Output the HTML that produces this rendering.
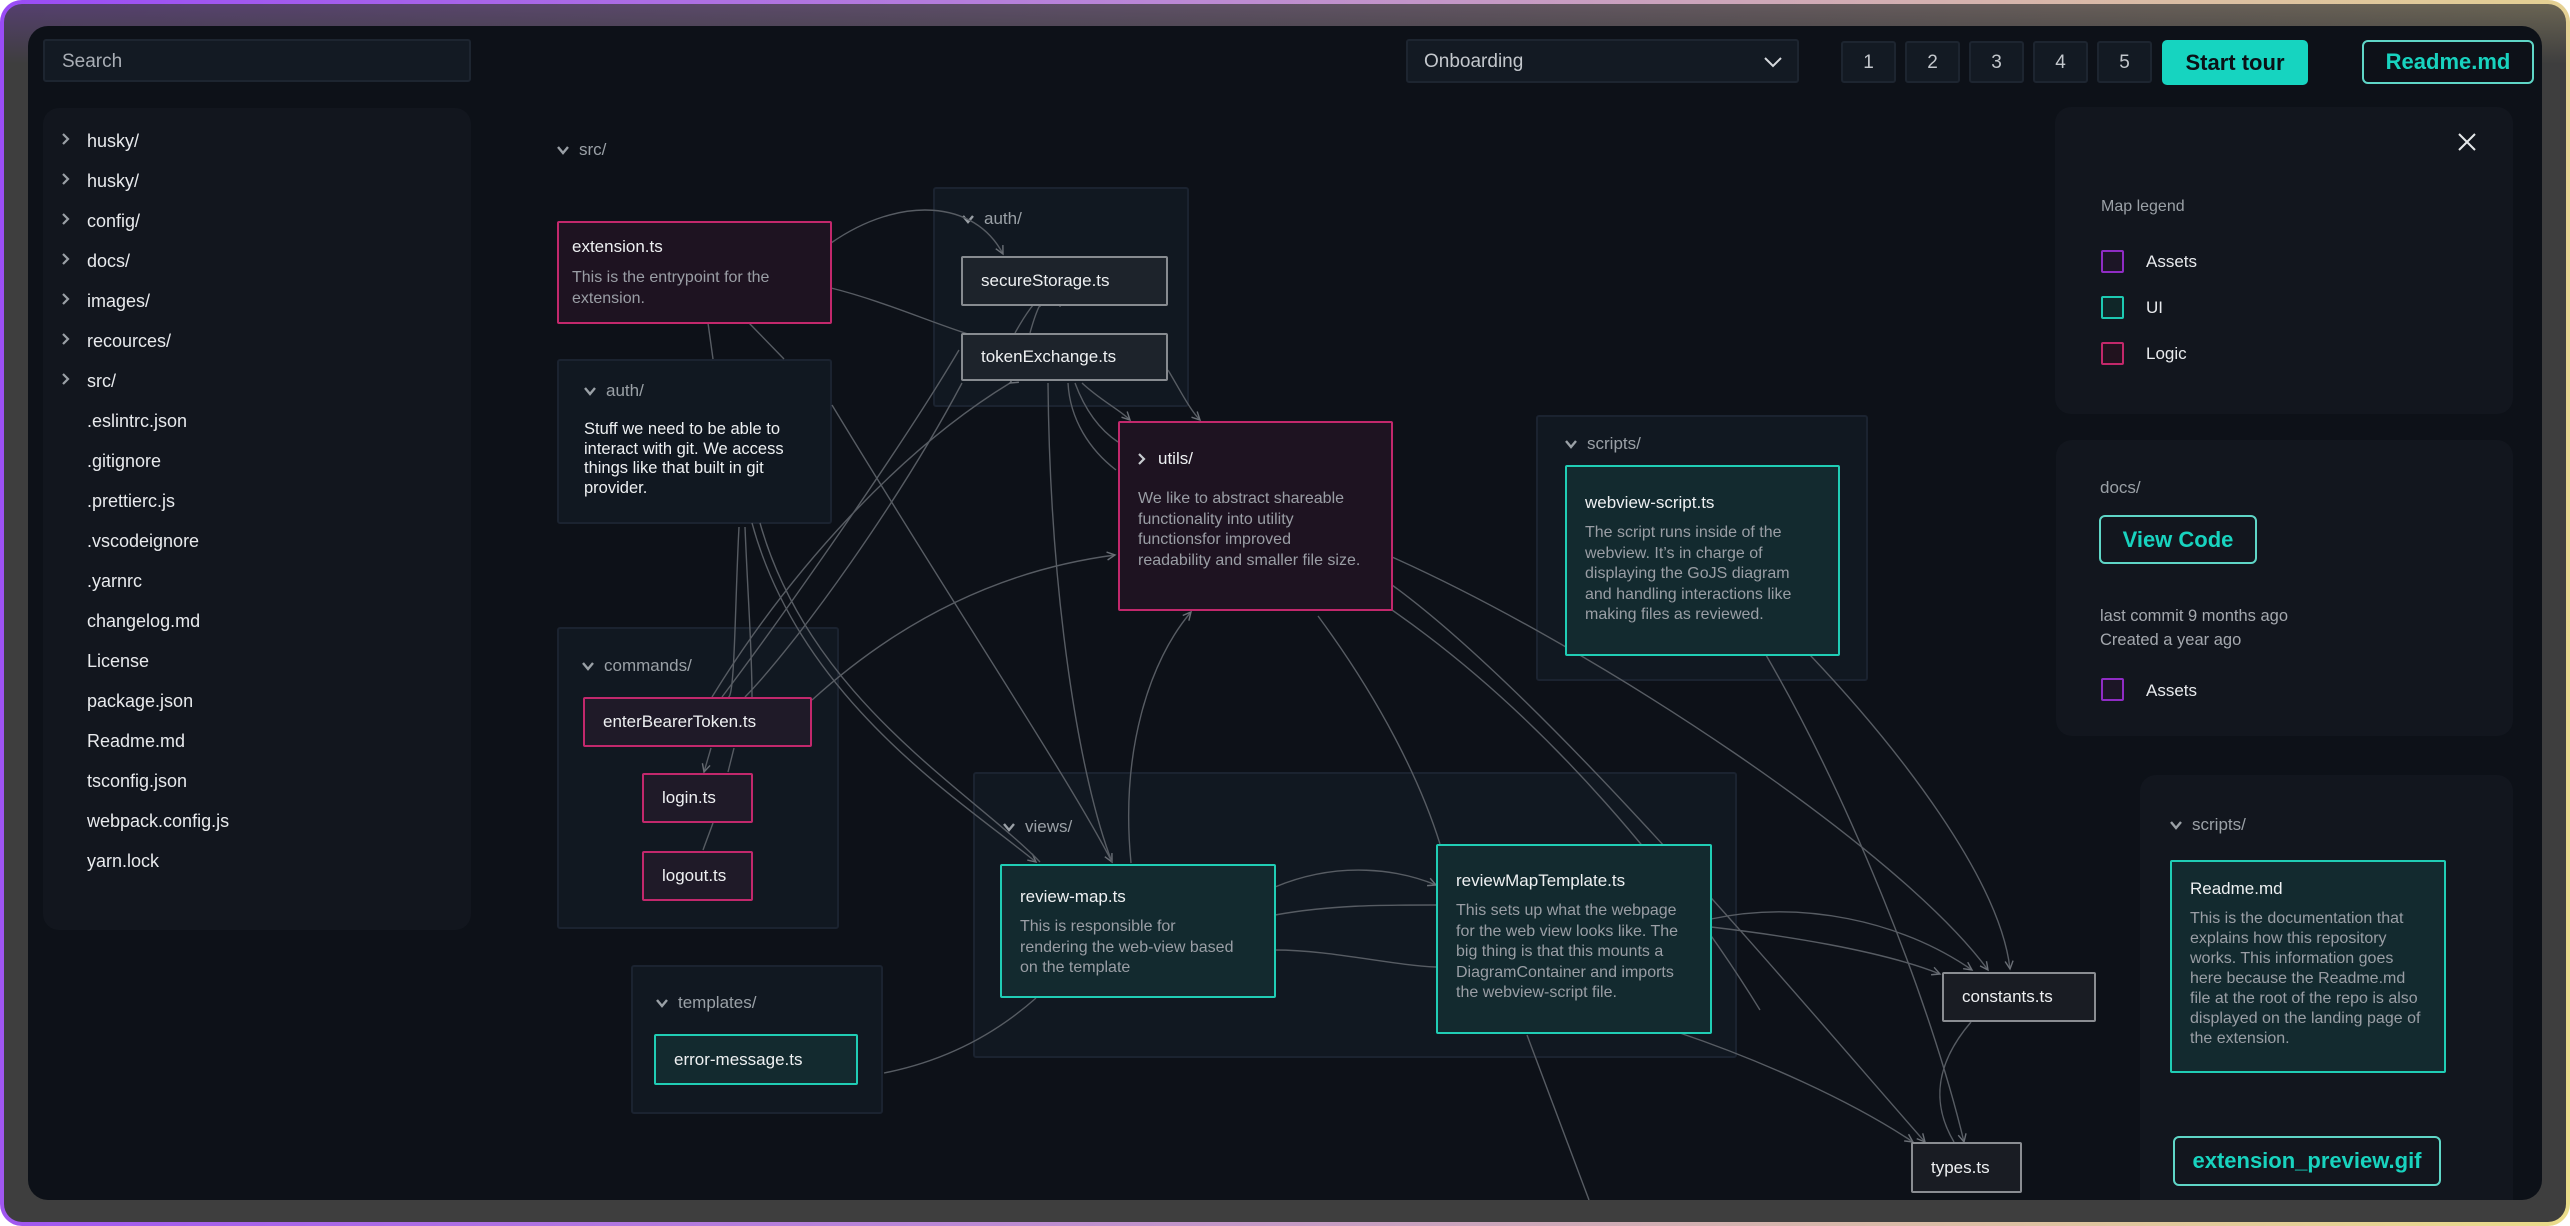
<!DOCTYPE html>
<html><head><meta charset="utf-8"><style>
*{box-sizing:border-box;margin:0;padding:0}
html,body{width:2570px;height:1226px;overflow:hidden;background:#fff}
body{font-family:"Liberation Sans",Arial,sans-serif;position:relative}
#outer{position:absolute;left:0;top:0;width:2570px;height:1226px;border-radius:22px;background:linear-gradient(100deg,#9a4cf6 0%,#b985d8 40%,#d9b9a8 75%,#eadc8a 100%)}
#frame{position:absolute;left:4px;top:4px;right:4px;bottom:4px;border-radius:18px;background:linear-gradient(180deg,rgba(58,58,58,.72) 0px,#3e3e3e 60px,#3e3e3e 100%)}
#panel{position:absolute;left:28px;top:26px;width:2514px;height:1174px;border-radius:20px;background:#0d1118;overflow:hidden}
.a{position:absolute}
.inp{position:absolute;background:#131a23;border:2px solid #1d2530;border-radius:3px;color:#c3c7cc;font-size:19px;display:flex;align-items:center;padding-top:2px}
.num{position:absolute;top:41px;width:55px;height:42px;background:#131a23;border:2px solid #1d2530;border-radius:3px;color:#c3c7cc;font-size:19px;display:flex;align-items:center;justify-content:center;padding-top:2px}
.tree{position:absolute;left:87px;font-size:18px;color:#e8eaed}
.grp{position:absolute;background:#111821;border:2px solid #1b2330;border-radius:3px}
.gl{position:absolute;font-size:17px;color:#9aa0a6;display:flex;align-items:center;gap:10px}
.card{position:absolute;border:2px solid;border-radius:2px;padding:0 18px}
.logic{background:#1e1321;border-color:#c2286c}
.ui{background:#132a2f;border-color:#20cdb5}
.neu{background:#1d232b;border-color:#878b90}
.neu2{background:#191c23;border-color:#8a8d92}
.t{font-size:17px;color:#eef0f2}
.d{font-size:16px;color:#9a9ea5;line-height:20.5px}
.side{position:absolute;background:#12161e;border-radius:16px}
.sq{position:absolute;width:23px;height:23px;border:2px solid;border-radius:2px}
.lt{position:absolute;font-size:17px;color:#e8eaed}
</style></head><body>
<div id="outer"><div id="frame"></div></div>
<div id="panel"></div>

<div class="inp" style="left:43px;top:39px;width:428px;height:43px;padding-left:17px;color:#a9aeb5">Search</div>
<div class="inp" style="left:1406px;top:39px;width:393px;height:44px;padding-left:16px">Onboarding
<svg class="a" style="right:14px;top:14px" width="20" height="14" viewBox="0 0 20 14"><path d="M2 3 L10 11 L18 3" fill="none" stroke="#d6d9dd" stroke-width="2"/></svg></div>
<div class="num" style="left:1841px">1</div>
<div class="num" style="left:1905px">2</div>
<div class="num" style="left:1969px">3</div>
<div class="num" style="left:2033px">4</div>
<div class="num" style="left:2097px">5</div>
<div class="a" style="left:2162px;top:40px;width:146px;height:45px;background:#16d4c0;border-radius:5px;color:#0b1117;font-size:22px;font-weight:bold;display:flex;align-items:center;justify-content:center">Start tour</div>
<div class="a" style="left:2362px;top:40px;width:172px;height:44px;border:2px solid #5fd6c7;border-radius:6px;color:#18d3bf;font-size:22px;font-weight:bold;display:flex;align-items:center;justify-content:center">Readme.md</div>

<div class="side" style="left:43px;top:108px;width:428px;height:822px"></div>
<svg class="a" style="left:0;top:0" width="480" height="420">
<g fill="none" stroke="#9aa0a6" stroke-width="2.2">
<path d="M63 134 L68 139 L63 144"/><path d="M63 174 L68 179 L63 184"/><path d="M63 214 L68 219 L63 224"/><path d="M63 254 L68 259 L63 264"/><path d="M63 294 L68 299 L63 304"/><path d="M63 334 L68 339 L63 344"/><path d="M63 374 L68 379 L63 384"/>
</g></svg>
<div class="tree" style="top:131px">husky/</div>
<div class="tree" style="top:171px">husky/</div>
<div class="tree" style="top:211px">config/</div>
<div class="tree" style="top:251px">docs/</div>
<div class="tree" style="top:291px">images/</div>
<div class="tree" style="top:331px">recources/</div>
<div class="tree" style="top:371px">src/</div>
<div class="tree" style="top:411px">.eslintrc.json</div>
<div class="tree" style="top:451px">.gitignore</div>
<div class="tree" style="top:491px">.prettierc.js</div>
<div class="tree" style="top:531px">.vscodeignore</div>
<div class="tree" style="top:571px">.yarnrc</div>
<div class="tree" style="top:611px">changelog.md</div>
<div class="tree" style="top:651px">License</div>
<div class="tree" style="top:691px">package.json</div>
<div class="tree" style="top:731px">Readme.md</div>
<div class="tree" style="top:771px">tsconfig.json</div>
<div class="tree" style="top:811px">webpack.config.js</div>
<div class="tree" style="top:851px">yarn.lock</div>

<div class="gl" style="left:557px;top:140px"><svg width="12" height="9"><path d="M1 1 L6 7 L11 1" fill="none" stroke="#9aa0a6" stroke-width="2.4"/></svg>src/</div>

<div class="grp" style="left:933px;top:187px;width:256px;height:220px"></div>
<div class="gl" style="left:962px;top:209px"><svg width="12" height="9"><path d="M1 1 L6 7 L11 1" fill="none" stroke="#9aa0a6" stroke-width="2.4"/></svg>auth/</div>

<div class="grp" style="left:557px;top:359px;width:275px;height:165px"></div>
<div class="gl" style="left:584px;top:381px"><svg width="12" height="9"><path d="M1 1 L6 7 L11 1" fill="none" stroke="#9aa0a6" stroke-width="2.4"/></svg>auth/</div>
<div class="a" style="left:584px;top:420px;font-size:16.5px;color:#eef0f2;line-height:19.7px;width:240px">Stuff we need to be able to interact with git. We access things like that built in git provider.</div>

<div class="grp" style="left:1536px;top:415px;width:332px;height:266px"></div>
<div class="gl" style="left:1565px;top:434px"><svg width="12" height="9"><path d="M1 1 L6 7 L11 1" fill="none" stroke="#9aa0a6" stroke-width="2.4"/></svg>scripts/</div>

<div class="grp" style="left:557px;top:627px;width:282px;height:302px"></div>
<div class="gl" style="left:582px;top:656px"><svg width="12" height="9"><path d="M1 1 L6 7 L11 1" fill="none" stroke="#9aa0a6" stroke-width="2.4"/></svg>commands/</div>

<div class="grp" style="left:631px;top:965px;width:252px;height:149px"></div>
<div class="gl" style="left:656px;top:993px"><svg width="12" height="9"><path d="M1 1 L6 7 L11 1" fill="none" stroke="#9aa0a6" stroke-width="2.4"/></svg>templates/</div>

<div class="grp" style="left:973px;top:772px;width:764px;height:286px"></div>
<div class="gl" style="left:1003px;top:817px"><svg width="12" height="9"><path d="M1 1 L6 7 L11 1" fill="none" stroke="#9aa0a6" stroke-width="2.4"/></svg>views/</div>

<svg class="a" style="left:0;top:0" width="2570" height="1226">
<defs><marker id="ar" markerWidth="12" markerHeight="12" refX="9" refY="5" orient="auto" markerUnits="userSpaceOnUse"><path d="M1 1 L9 5 L1 9" fill="none" stroke="#6a6f76" stroke-width="1.4"/></marker></defs>
<g fill="none" stroke="#575c63" stroke-width="1.4">
<path d="M831,243 C 900,195 975,200 1003,254" marker-end="url(#ar)"/>
<path d="M831,288 C 880,300 930,322 968,334"/>
<path d="M708,323 L713,359"/><path d="M749,323 L784,359"/>
<path d="M832,405 C 950,600 1070,780 1112,862" marker-end="url(#ar)"/>
<path d="M959,350 C 900,450 780,620 722,697"/>
<path d="M962,383 C 900,500 800,640 745,697"/>
<path d="M1010,383 C 900,450 790,570 712,697" marker-start="url(#ar)"/>
<path d="M739,527 C 735,600 735,700 728,697"/>
<path d="M745,527 C 748,600 752,650 752,697"/>
<path d="M752,523 C 800,700 960,800 1036,862" marker-end="url(#ar)"/>
<path d="M760,523 C 810,700 970,790 1040,862"/>
<path d="M812,700 C 900,620 1000,570 1115,555" marker-end="url(#ar)"/>
<path d="M1048,383 C 1050,600 1080,780 1112,862"/>
<path d="M1131,863 C 1120,750 1150,660 1191,612" marker-end="url(#ar)"/>
<path d="M1082,383 C 1100,400 1120,410 1130,420" marker-end="url(#ar)"/>
<path d="M1168,370 C 1180,390 1190,410 1200,420" marker-end="url(#ar)"/>
<path d="M1068,383 C 1070,420 1090,450 1116,470"/>
<path d="M1075,383 C 1085,410 1100,430 1118,442"/>
<path d="M1040,307 L1040,278" marker-end="url(#ar)"/><path d="M1060,307 L1062,278" marker-end="url(#ar)"/>
<path d="M1015,333 C 1025,315 1035,300 1048,290" marker-end="url(#ar)"/>
<path d="M1030,333 C 1035,315 1040,300 1050,292" marker-end="url(#ar)"/>
<path d="M1392,557 C 1600,650 1900,850 1988,970" marker-end="url(#ar)"/>
<path d="M1392,585 C 1550,700 1800,1000 1925,1142" marker-end="url(#ar)"/>
<path d="M1318,616 C 1380,700 1420,780 1440,844"/>
<path d="M1392,610 C 1550,720 1680,880 1760,1010"/>
<path d="M1766,655 C 1850,800 1930,1000 1964,1142" marker-end="url(#ar)"/>
<path d="M1810,655 C 1900,750 2000,880 2010,969" marker-end="url(#ar)"/>
<path d="M1711,919 C 1800,900 1900,920 1972,970" marker-end="url(#ar)"/>
<path d="M1711,927 C 1780,935 1880,950 1940,974" marker-end="url(#ar)"/>
<path d="M1677,1032 C 1760,1060 1850,1100 1913,1142" marker-end="url(#ar)"/>
<path d="M1527,1035 L1589,1200"/>
<path d="M1971,1022 C 1930,1070 1935,1110 1954,1142"/>
<path d="M1275,887 C 1340,860 1400,870 1436,885" marker-end="url(#ar)"/>
<path d="M1275,915 C 1330,905 1380,905 1436,905"/>
<path d="M1275,950 C 1330,950 1390,965 1436,967"/>
<path d="M884,1073 C 950,1060 1000,1030 1036,998"/>
<path d="M711,748 L704,772" marker-end="url(#ar)"/><path d="M734,748 L728,772"/>
<path d="M713,823 L703,850"/>
</g></svg>

<div class="card logic" style="left:557px;top:221px;width:275px;height:103px;padding:0 13px">
<div class="t" style="margin-top:14px">extension.ts</div>
<div class="d" style="margin-top:11px">This is the entrypoint for the extension.</div></div>

<div class="card neu" style="left:961px;top:256px;width:207px;height:50px;display:flex;align-items:center"><span class="t">secureStorage.ts</span></div>
<div class="card neu" style="left:961px;top:333px;width:207px;height:48px;display:flex;align-items:center"><span class="t">tokenExchange.ts</span></div>

<div class="card logic" style="left:1118px;top:421px;width:275px;height:190px;padding-right:28px">
<div class="t" style="margin-top:26px;display:flex;align-items:center;gap:12px"><svg width="8" height="12"><path d="M1 1 L6 6 L1 11" fill="none" stroke="#c8ccd0" stroke-width="2.2"/></svg>utils/</div>
<div class="d" style="margin-top:20px">We like to abstract shareable functionality into utility functionsfor improved readability and smaller file size.</div></div>

<div class="card ui" style="left:1565px;top:465px;width:275px;height:191px">
<div class="t" style="margin-top:26px">webview-script.ts</div>
<div class="d" style="margin-top:10px">The script runs inside of the webview. It’s in charge of displaying the GoJS diagram and handling interactions like making files as reviewed.</div></div>

<div class="card logic" style="left:583px;top:697px;width:229px;height:50px;display:flex;align-items:center;background:#1f1a28"><span class="t">enterBearerToken.ts</span></div>
<div class="card logic" style="left:642px;top:773px;width:111px;height:50px;display:flex;align-items:center;background:#1f1a28"><span class="t">login.ts</span></div>
<div class="card logic" style="left:642px;top:851px;width:111px;height:50px;display:flex;align-items:center;background:#1f1a28"><span class="t">logout.ts</span></div>

<div class="card ui" style="left:654px;top:1034px;width:204px;height:51px;display:flex;align-items:center"><span class="t">error-message.ts</span></div>

<div class="card ui" style="left:1000px;top:864px;width:276px;height:134px;padding-right:30px">
<div class="t" style="margin-top:21px">review-map.ts</div>
<div class="d" style="margin-top:10px">This is responsible for rendering the web-view based on the template</div></div>

<div class="card ui" style="left:1436px;top:844px;width:276px;height:190px">
<div class="t" style="margin-top:25px">reviewMapTemplate.ts</div>
<div class="d" style="margin-top:10px">This sets up what the webpage for the web view looks like. The big thing is that this mounts a DiagramContainer and imports the webview-script file.</div></div>

<div class="card neu2" style="left:1942px;top:972px;width:154px;height:50px;display:flex;align-items:center"><span class="t">constants.ts</span></div>
<div class="card neu2" style="left:1911px;top:1142px;width:111px;height:51px;display:flex;align-items:center"><span class="t">types.ts</span></div>

<div class="side" style="left:2055px;top:107px;width:458px;height:307px"></div>
<svg class="a" style="left:2456px;top:131px" width="22" height="22"><path d="M3 3 L19 19 M19 3 L3 19" stroke="#e6e8ea" stroke-width="2"/></svg>
<div class="a" style="left:2101px;top:198px;font-size:16px;color:#9aa0a6">Map legend</div>
<div class="sq" style="left:2101px;top:250px;border-color:#8f2cc4;background:#1c1526"></div><div class="lt" style="left:2146px;top:252px">Assets</div>
<div class="sq" style="left:2101px;top:296px;border-color:#1dc9b2;background:#0f2628"></div><div class="lt" style="left:2146px;top:298px">UI</div>
<div class="sq" style="left:2101px;top:342px;border-color:#c2286a;background:#21121e"></div><div class="lt" style="left:2146px;top:344px">Logic</div>

<div class="side" style="left:2056px;top:440px;width:457px;height:296px"></div>
<div class="a" style="left:2100px;top:478px;font-size:17px;color:#9aa0a6">docs/</div>
<div class="a" style="left:2099px;top:515px;width:158px;height:49px;border:2px solid #5fd6c7;border-radius:6px;color:#18d3bf;font-size:22px;font-weight:bold;display:flex;align-items:center;justify-content:center">View Code</div>
<div class="a" style="left:2100px;top:604px;font-size:16.5px;color:#a4a8ae;line-height:24px">last commit 9 months ago<br>Created a year ago</div>
<div class="sq" style="left:2101px;top:678px;border-color:#8f2cc4;background:#1c1526"></div><div class="lt" style="left:2146px;top:681px">Assets</div>

<div class="side" style="left:2140px;top:775px;width:373px;height:425px;border-radius:16px 16px 0 0"></div>
<div class="gl" style="left:2170px;top:815px"><svg width="12" height="9"><path d="M1 1 L6 7 L11 1" fill="none" stroke="#9aa0a6" stroke-width="2.4"/></svg>scripts/</div>
<div class="card ui" style="left:2170px;top:860px;width:276px;height:213px">
<div class="t" style="margin-top:17px">Readme.md</div>
<div class="d" style="margin-top:10px;line-height:20px">This is the documentation that explains how this repository works. This information goes here because the Readme.md file at the root of the repo is also displayed on the landing page of the extension.</div></div>
<div class="a" style="left:2173px;top:1136px;width:268px;height:50px;border:2px solid #5fd6c7;border-radius:6px;color:#18d3bf;font-size:22px;font-weight:bold;display:flex;align-items:center;justify-content:center">extension_preview.gif</div>

<div class="a" style="left:28px;top:1200px;width:2514px;height:22px;background:#3e3e3e"></div>
</body></html>
